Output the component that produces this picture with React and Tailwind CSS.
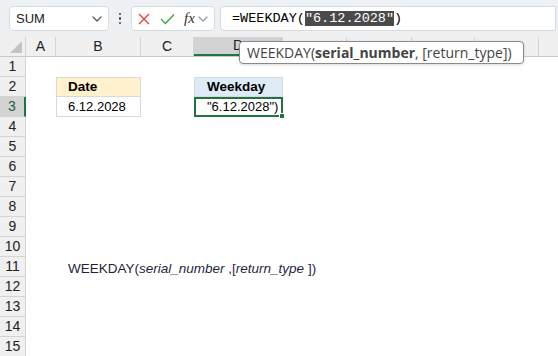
import React from "react";

const cols = [
  { k: "A", w: 30 },
  { k: "B", w: 85 },
  { k: "C", w: 53 },
  { k: "D", w: 89 },
  { k: "E", w: 64 },
  { k: "F", w: 65 },
  { k: "G", w: 63 },
  { k: "H", w: 64 },
  { k: "I", w: 64 },
];

function Chevron({ className }) {
  return (
    <svg className={className} width="10" height="6" viewBox="0 0 10 6" fill="none">
      <path d="M1 1l4 4 4-4" stroke="currentColor" strokeWidth="1.2" strokeLinecap="round" strokeLinejoin="round" />
    </svg>
  );
}

function Cell({ w, className = "", children }) {
  return (
    <div className={`shrink-0 h-full ${className}`} style={{ width: w }}>
      {children}
    </div>
  );
}

export default function App() {
  const rows = Array.from({ length: 15 }, (_, i) => i + 1);
  return (
    <div
      className="relative w-[558px] h-[356px] overflow-hidden bg-white"
      style={{ fontFamily: '"Liberation Sans", Arial, sans-serif' }}
    >
      {/* toolbar */}
      <div className="flex items-center h-[37px] bg-[#eef1f4] pl-[9px] pr-[2px]">
        <div className="flex items-center justify-between w-[100px] h-[25px] bg-white border border-[#d6d9dd] rounded-[4px] pl-[6px] pr-[6px]">
          <span className="text-[13px] text-[#222]">SUM</span>
          <Chevron className="text-[#555]" />
        </div>
        <div className="w-[22px] flex flex-col items-center justify-center gap-[2px]">
          <span className="w-[2.5px] h-[2.5px] rounded-full bg-[#444]" />
          <span className="w-[2.5px] h-[2.5px] rounded-full bg-[#444]" />
          <span className="w-[2.5px] h-[2.5px] rounded-full bg-[#444]" />
        </div>
        <div className="flex items-center w-[84px] h-[25px] bg-white border border-[#d6d9dd] rounded-[4px] pl-[5px]">
          <svg width="14" height="14" viewBox="0 0 14 14">
            <path d="M2 2l10 10M12 2L2 12" stroke="#e0403a" strokeWidth="1.3" />
          </svg>
          <svg className="ml-[9px]" width="15" height="12" viewBox="0 0 15 12">
            <path d="M1 6l4.5 4.5L14 1.5" stroke="#3aa346" strokeWidth="1.3" fill="none" />
          </svg>
          <span
            className="ml-[9px] text-[15px] italic text-[#333] leading-none"
            style={{ fontFamily: '"Liberation Serif", "Times New Roman", serif' }}
          >
            fx
          </span>
          <Chevron className="ml-[3px] text-[#999]" />
        </div>
        <div className="flex items-center ml-[5px] flex-1 h-[25px] bg-white border border-[#d6d9dd] rounded-l-[4px] pl-[11px]">
          <span
            className="text-[13.5px] text-black whitespace-pre leading-[16px]"
            style={{ fontFamily: '"Liberation Mono", "Courier New", monospace' }}
          >
            =WEEKDAY(<span className="bg-[#4a4a4a] text-white">"6.12.2028"</span>)
          </span>
        </div>
      </div>

      {/* column headers */}
      <div className="flex h-[20px] bg-[#f0f0f0] border-b border-[#c8c8c8]">
        <div className="relative w-[26px] shrink-0 border-r border-[#d4d4d4]">
          <svg className="absolute right-[3px] bottom-[3px]" width="12" height="12" viewBox="0 0 12 12">
            <path d="M12 0L12 12L0 12Z" fill="#c4c4c4" />
          </svg>
        </div>
        {cols.map((c) => (
          <Cell
            key={c.k}
            w={c.w}
            className={`flex items-center justify-center border-r border-[#d4d4d4] text-[14px] ${
              c.k === "D" ? "bg-[#d3d3d3] border-b-2 border-b-[#217346] text-[#222]" : "text-[#222]"
            }`}
          >
            {c.k}
          </Cell>
        ))}
      </div>

      {/* rows */}
      {rows.map((r) => (
        <div key={r} className="flex h-[20px]">
          <div
            className={`w-[26px] shrink-0 flex items-center justify-center text-[14px] border-b border-r border-[#d4d4d4] ${
              r === 3 ? "bg-[#d3d3d3] border-r-2 border-r-[#217346] text-[#1e5e3a]" : "bg-[#f0f0f0] text-[#222]"
            }`}
          >
            {r}
          </div>
          <Cell w={30} />
          <Cell
            w={85}
            className={
              r === 2
                ? "bg-[#fff2cc] border border-[#d9d9d9] flex items-center pl-[11px] font-bold text-[13.5px] text-black"
                : r === 3
                ? "border border-t-0 border-[#d9d9d9] flex items-center pl-[11px] text-[13px] text-black"
                : r === 11
                ? "relative"
                : ""
            }
          >
            {r === 2 && "Date"}
            {r === 3 && "6.12.2028"}
            {r === 11 && (
              <span className="absolute left-[12px] top-[2px] whitespace-pre text-[13.5px] text-[#1f1f3f]">
                WEEKDAY(<i>serial_number</i> ,[<i>return_type</i> ])
              </span>
            )}
          </Cell>
          <Cell w={53} />
          <Cell
            w={89}
            className={
              r === 2
                ? "bg-[#ddebf7] border border-[#d9d9d9] flex items-center pl-[12px] font-bold text-[13.5px] text-black"
                : r === 3
                ? "relative border-2 border-[#217346] flex items-center pl-[11px] text-[13px] text-black"
                : ""
            }
          >
            {r === 2 && "Weekday"}
            {r === 3 && (
              <>
                "6.12.2028")
                <span className="absolute right-[-4px] bottom-[-4px] w-[6px] h-[6px] bg-[#217346] border border-white" />
              </>
            )}
          </Cell>
          <Cell w={64} />
          <Cell w={65} />
          <Cell w={63} />
          <Cell w={64} />
          <Cell w={64} />
        </div>
      ))}

      {/* tooltip */}
      <div
        className="absolute left-[239px] top-[41px] h-[23px] w-[285px] bg-white border border-[#8a8a8a] rounded-[4px] flex items-center pl-[7px] text-[14px] text-[#444] whitespace-pre shadow-[0_1px_3px_rgba(0,0,0,0.15)]"
        style={{ fontFamily: '"Open Sans", "Noto Sans", sans-serif' }}
      >
        WEEKDAY(<b>serial_number</b>, [return_type])
      </div>
    </div>
  );
}
